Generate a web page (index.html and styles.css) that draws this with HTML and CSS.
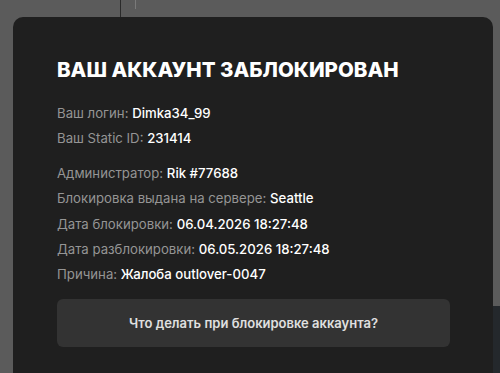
FILE: index.html
```html
<!DOCTYPE html>
<html lang="ru">
<head>
    <meta charset="UTF-8">
    <meta name="viewport" content="width=device-width, initial-scale=1.0">
    <title>Аккаунт заблокирован</title>
    <link rel="stylesheet" href="styles.css">
</head>
<body>
    <div class="backdrop">
        <span class="line line-dark"></span>
        <span class="line line-light"></span>
        <div class="scroll-strip"></div>
    </div>
    <div class="modal">
        <h1 class="title">ВАШ АККАУНТ ЗАБЛОКИРОВАН</h1>
        <div class="group">
            <div class="row"><span class="key">Ваш логин:</span> <span class="val">Dimka34_99</span></div>
            <div class="row"><span class="key">Ваш Static ID:</span> <span class="val">231414</span></div>
        </div>
        <div class="group">
            <div class="row"><span class="key">Администратор:</span> <span class="val">Rik #77688</span></div>
            <div class="row"><span class="key">Блокировка выдана на сервере:</span> <span class="val">Seattle</span></div>
            <div class="row"><span class="key">Дата блокировки:</span> <span class="val">06.04.2026 18:27:48</span></div>
            <div class="row"><span class="key">Дата разблокировки:</span> <span class="val">06.05.2026 18:27:48</span></div>
            <div class="row"><span class="key">Причина:</span> <span class="val">Жалоба outlover-0047</span></div>
        </div>
        <button class="help">Что делать при блокировке аккаунта?</button>
    </div>
</body>
</html>
```

FILE: styles.css
```css
html, body {
    margin: 0;
    height: 100%;
    overflow: hidden;
}
body {
    font-family: Inter, "Liberation Sans", sans-serif;
    background-color: #5b5b5b;
    position: relative;
}
.backdrop .line {
    position: absolute;
    top: 0;
    width: 1px;
}
.line-dark {
    left: 120px;
    height: 17px;
    background-color: #2a2a2a;
}
.line-light {
    left: 135px;
    height: 9px;
    background-color: #7a7a7a;
}
.scroll-strip {
    position: absolute;
    right: 0;
    top: 306px;
    bottom: 0;
    width: 7px;
    background-color: #24282c;
}
.modal {
    position: relative;
    margin: 17px 7px 0 13px;
    height: 356px;
    box-sizing: border-box;
    padding: 38px 43px 0 44px;
    background-color: #1f1f1f;
    border-radius: 10px 10px 0 0;
    color: #fff;
}
.title {
    margin: 0 0 16px;
    font-size: 20.5px;
    line-height: 30px;
    font-weight: 800;
    letter-spacing: 0;
}
.group {
    margin-bottom: 9px;
}
.row {
    font-size: 13.2px;
    line-height: 25.4px;
}
.key {
    color: #959595;
}
.val {
    color: #fff;
    font-weight: 500;
}
.help {
    display: block;
    width: 100%;
    height: 48px;
    margin-top: 11px;
    border: none;
    border-radius: 6px;
    background-color: #333;
    color: #e0e0e0;
    font-family: inherit;
    font-size: 13px;
    font-weight: 600;
}
```
